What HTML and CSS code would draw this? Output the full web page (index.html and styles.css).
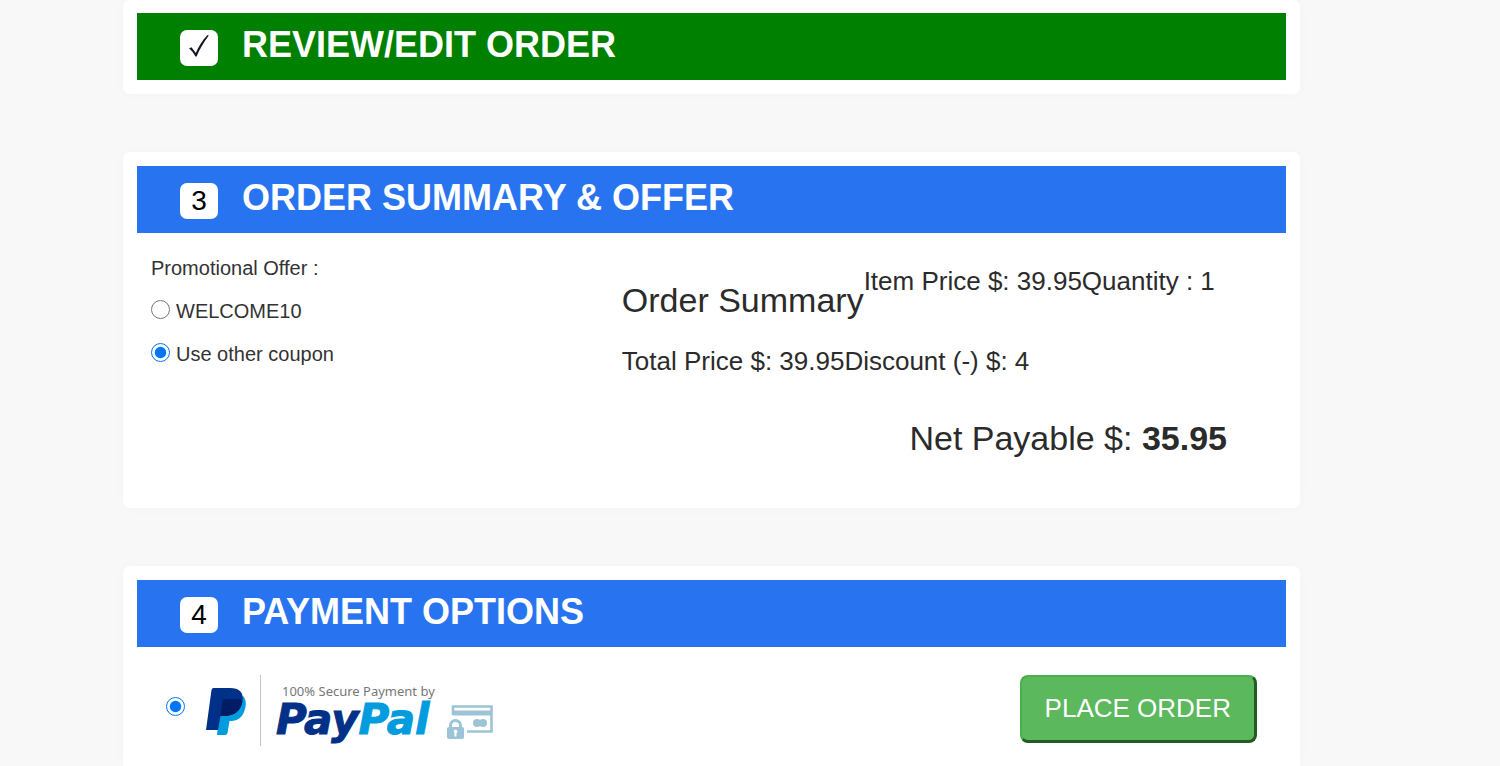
FILE: index.html
```html
<!DOCTYPE html>
<html lang="en">
<head>
<meta charset="utf-8">
<title>Checkout</title>
<link rel="stylesheet" href="styles.css">
</head>
<body>
<main class="checkout">
  <section class="card card-first">
    <header class="step step-done">
      <span class="step-badge">
        <svg class="step-check" viewBox="0 0 20 24" width="20" height="24" aria-label="Done"><path d="M0 15.500 2.500 14.200 6.800 20C9.500 13.500 13.500 7 18.500 2L19.800 2.400C15 9 10.500 16 7.600 23.500H6.400C4.500 20 2.500 17.300 0 15.500Z" fill="#1a1423"/></svg>
      </span>
      <h2 class="step-title">REVIEW/EDIT ORDER</h2>
    </header>
  </section>

  <section class="card">
    <header class="step">
      <span class="step-badge">3</span>
      <h2 class="step-title">ORDER SUMMARY &amp; OFFER</h2>
    </header>
    <div class="order">
      <fieldset class="offers">
        <legend class="offer-line">Promotional Offer :</legend>
        <label class="offer-line"><input class="radio" type="radio" name="offer"><span>WELCOME10</span></label>
        <label class="offer-line"><input class="radio" type="radio" name="offer" checked><span>Use other coupon</span></label>
      </fieldset>
      <div class="summary">
        <div class="summary-top">
          <h3 class="summary-title">Order Summary</h3>
          <p class="summary-line">Item Price $: 39.95Quantity : 1</p>
        </div>
        <p class="summary-line">Total Price $: 39.95Discount (-) $: 4</p>
        <p class="summary-net">Net Payable $: <strong>35.95</strong></p>
      </div>
    </div>
  </section>

  <section class="card card-last">
    <header class="step">
      <span class="step-badge">4</span>
      <h2 class="step-title">PAYMENT OPTIONS</h2>
    </header>
    <div class="payment">
      <label class="method">
        <input class="radio" type="radio" name="method" checked>
        <svg class="paypal" viewBox="0 0 290 72" width="290" height="72" role="img" aria-label="100% Secure Payment by PayPal">
          <path d="M14 33 37 21C40 24 40.500 29 39 34 37 42 32 46 25 46H23.500L21.500 58Q21 60 19 60H11Z" fill="#009cde"/>
          <path d="M7.500 13H24C33 13 38 17 36.500 26 35 36 28 41 18 41H14.500L12 55H0L5.500 15Q6 13 7.500 13Z" fill="#003087"/>
          <path d="M17.500 24H31Q34.500 24 36.500 26C35 36 28 41 18 41H14.500L16.500 26Q16.500 24 17.500 24Z" fill="#001c64"/>
          <path d="M54.500 0V71" stroke="#c4c4c4" fill="none"/>
          <text class="paypal-note" x="76" y="21">100% Secure Payment by</text>
          <text class="paypal-word" x="70" y="59"><tspan class="paypal-dark">Pay</tspan><tspan class="paypal-light">Pal</tspan></text>
          <path d="M247 40V31.500H285.500V56.500H261" fill="none" stroke="#9dc3d6" stroke-width="2.600"/>
          <path d="M247 35.500H286V40.500H247Z" fill="#9dc3d6"/>
          <circle cx="271" cy="48" r="4" fill="#9dc3d6"/><circle cx="277" cy="48" r="4" fill="#9dc3d6"/>
          <path d="M244.500 54V50.500a5 5 0 0 1 10 0V54" fill="none" stroke="#9dc3d6" stroke-width="3"/>
          <rect x="241" y="52" width="17" height="12" rx="2" fill="#9dc3d6"/>
          <path d="M249.500 54.500a2 2 0 0 1 1 3.600V61.500h-2v-3.400a2 2 0 0 1 1-3.600Z" fill="#fff"/>
        </svg>
      </label>
      <button class="place-order" type="button">PLACE ORDER</button>
    </div>
  </section>
</main>
</body>
</html>
```
FILE: styles.css
```css
* {
  box-sizing: border-box;
}

body {
  margin: 0;
  background: #f8f8f8;
  color: #333;
  font-family: "Liberation Sans", Arial, sans-serif;
  font-size: 20px;
}

h2,
h3,
p {
  margin: 0;
}

.checkout {
  display: flex;
  flex-direction: column;
  gap: 58px;
  min-height: 100vh;
  padding: 0 200px 0 123px;
}

.card {
  padding: 14px;
  border-radius: 7px;
  background: #fff;
  box-shadow: 0 0 14px rgba(0, 0, 0, 0.02);
}

.card-first {
  padding-top: 13px;
}

.card-last {
  flex: 1;
  border-radius: 7px 7px 0 0;
  padding-bottom: 0;
}

.step {
  display: flex;
  align-items: baseline;
  gap: 24px;
  padding: 11px 43px 14px;
  background: #2874f0;
  color: #fff;
}

.step-done {
  background: #008000;
}

.step-badge {
  width: 38px;
  height: 36px;
  border-radius: 7px;
  background: #fff;
  color: #000;
  font-size: 28px;
  line-height: 36px;
  text-align: center;
}

.step-check {
  vertical-align: baseline;
}

.step-title {
  font-size: 36px;
  line-height: 41px;
}

.order {
  display: grid;
  grid-template-columns: 42% 1fr;
  padding: 14px 14px 36px;
}

.offers {
  margin: 0;
  padding: 0;
  border: 0;
}

.offer-line {
  display: flex;
  align-items: center;
  gap: 6px;
  padding: 0;
  line-height: 43px;
}

.radio {
  flex: none;
  width: 19px;
  height: 19px;
  margin: 0;
}

.offer-line .radio {
  margin-bottom: 4px;
}

.summary {
  padding-top: 16px;
  color: #2b2b2b;
}

.summary-top {
  display: flex;
  align-items: flex-start;
  margin-bottom: 23px;
}

.summary-title {
  margin-top: 17px;
  font-size: 34px;
  font-weight: 400;
  line-height: 40px;
}

.summary-line {
  font-size: 26px;
  line-height: 36px;
}

.summary-net {
  margin-top: 39px;
  padding-right: 45px;
  font-size: 34px;
  line-height: 40px;
  text-align: right;
}

.payment {
  display: flex;
  justify-content: space-between;
  align-items: flex-start;
  padding: 28px 29px 0;
}

.method {
  display: flex;
  align-items: center;
  gap: 21px;
}

.method .radio {
  margin-bottom: 10px;
}

.paypal-note {
  fill: #777;
  font-family: "Noto Sans", sans-serif;
  font-size: 13px;
}

.paypal-word {
  font-family: "DejaVu Sans", sans-serif;
  font-size: 42px;
  font-style: italic;
  font-weight: 700;
}

.paypal-dark {
  fill: #003087;
  stroke: #003087;
}

.paypal-light {
  fill: #009cde;
  stroke: #009cde;
}

.place-order {
  padding: 0 23px;
  border-color: #4cae4c #225c22 #225c22 #4cae4c;
  border-style: solid;
  border-width: 2px 3px 3px 2px;
  border-radius: 8px;
  background: #5cb85c;
  color: #fff;
  font-family: inherit;
  font-size: 26px;
  line-height: 63px;
}
```
